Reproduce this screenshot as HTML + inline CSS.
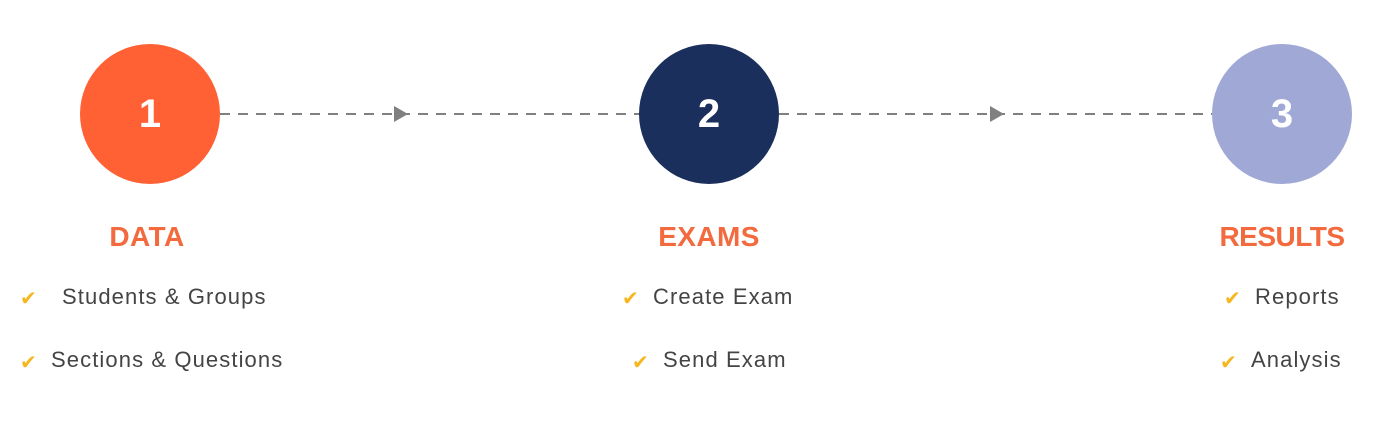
<!DOCTYPE html><html><head><style>
body{margin:0;width:1399px;height:440px;background:#fff;position:relative;overflow:hidden;font-family:"Liberation Sans",sans-serif}
.c{position:absolute;width:140px;height:140px;border-radius:50%;top:44px;color:#fff;font-weight:bold;font-size:40px;line-height:140px;text-align:center}
.t{position:absolute;top:221px;font-size:28px;font-weight:bold;color:#f26a3d;text-align:center;width:300px;letter-spacing:0.4px}
.i{position:absolute;font-size:22px;color:#444;white-space:nowrap;letter-spacing:1.1px}
.k{position:absolute;color:#f5b61e;font-size:20px}
</style></head><body>
<svg style="position:absolute;left:0;top:0" width="1399" height="440">
<line x1="220" y1="114" x2="640" y2="114" stroke="#808080" stroke-width="2" stroke-dasharray="10 8"/>
<line x1="779" y1="114" x2="1212" y2="114" stroke="#808080" stroke-width="2" stroke-dasharray="10 8"/>
<polygon points="394,106 408,114 394,122" fill="#808080"/>
<polygon points="990,106 1004,114 990,122" fill="#808080"/>
</svg>
<div class="c" style="left:80px;background:#ff6034">1</div>
<div class="c" style="left:639px;background:#1b2f5c">2</div>
<div class="c" style="left:1212px;background:#a0a8d6">3</div>
<div class="t" style="left:-3px">DATA</div>
<div class="t" style="left:559px">EXAMS</div>
<div class="t" style="left:1132px;letter-spacing:-0.5px">RESULTS</div>
<span class="k" style="left:20px;top:286px">✔</span><span class="i" style="left:62px;top:284px">Students &amp; Groups</span>
<span class="k" style="left:20px;top:350px">✔</span><span class="i" style="left:51px;top:347px">Sections &amp; Questions</span>
<span class="k" style="left:622px;top:286px">✔</span><span class="i" style="left:653px;top:284px">Create Exam</span>
<span class="k" style="left:632px;top:350px">✔</span><span class="i" style="left:663px;top:347px">Send Exam</span>
<span class="k" style="left:1224px;top:286px">✔</span><span class="i" style="left:1255px;top:284px">Reports</span>
<span class="k" style="left:1220px;top:350px">✔</span><span class="i" style="left:1251px;top:347px">Analysis</span>
</body></html>
